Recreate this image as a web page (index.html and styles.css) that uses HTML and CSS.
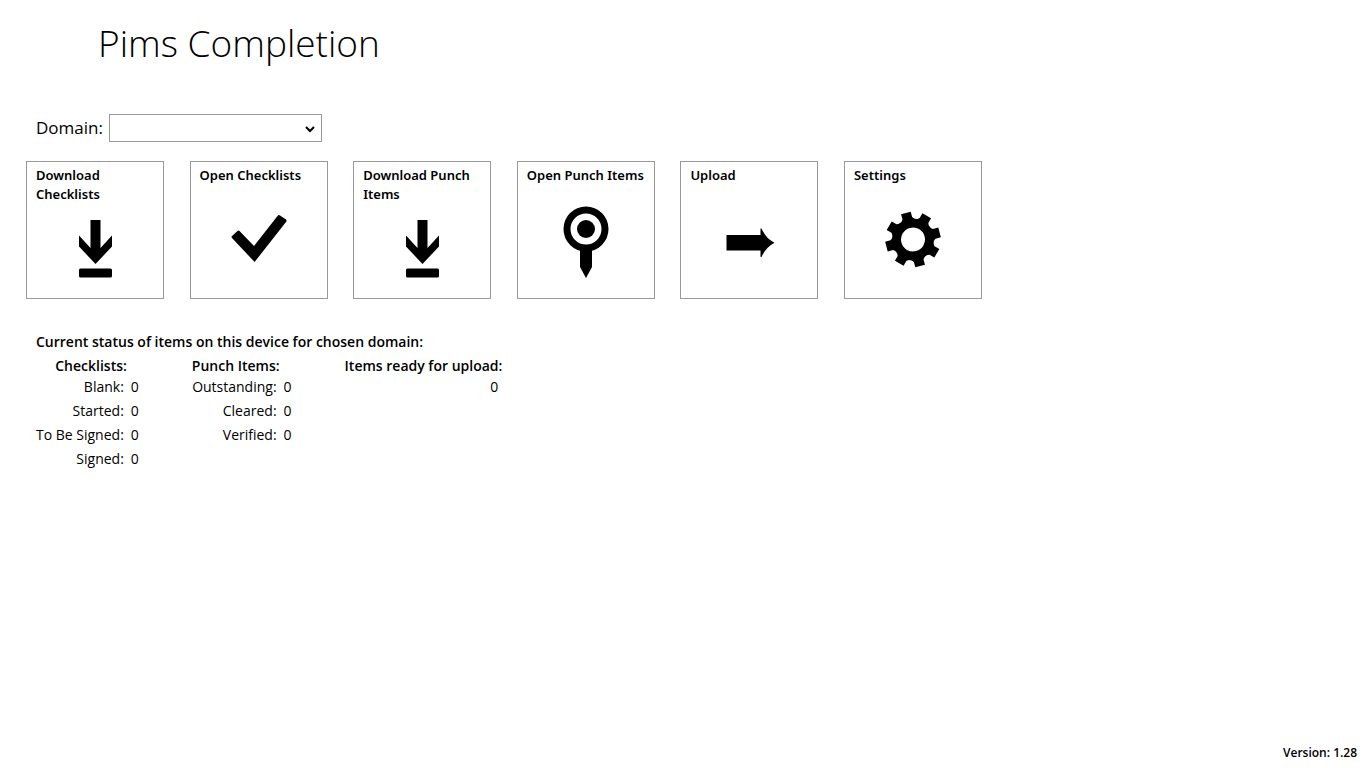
FILE: index.html
```html
<!DOCTYPE html>
<html lang="en">

<head>
    <meta charset="UTF-8">
    <meta name="viewport" content="width=device-width, initial-scale=1.0">
    <title>Pims Completion</title>
    <link rel="stylesheet" href="styles.css">
</head>

<body>

    <header>
        <h1>Pims Completion</h1>
    </header>

    <main>
        <div class="domain">
            <label for="domain">Domain:</label>
            <div class="select-box">
                <select id="domain">
                    <option value=""></option>
                </select>
                <svg class="chevron" viewBox="0 0 10 8" aria-hidden="true">
                    <path d="M1 2 L5 6 L9 2" fill="none" stroke="#000" stroke-width="2"/>
                </svg>
            </div>
        </div>

        <div class="tiles">
            <button class="tile" type="button">
                <span class="tile-label">Download Checklists</span>
                <svg class="tile-icon" viewBox="0 0 64 80" aria-hidden="true">
                    <path d="M27.500 16H37.500V44L49 31.500V42.500L32.500 60L16 42.500V31.500L27.500 44Z"/>
                    <rect x="16" y="64.500" width="33" height="9" rx="1.500"/>
                </svg>
            </button>
            <button class="tile" type="button">
                <span class="tile-label">Open Checklists</span>
                <svg class="tile-icon" viewBox="0 0 64 80" aria-hidden="true">
                    <path d="M5 34Q4 33 5 32L10.500 27Q11.500 26 12.500 27L27 42L50.500 12Q51.500 10.500 53 11.500L59 15.500Q60 16.500 59 18L27.600 58Z"/>
                </svg>
            </button>
            <button class="tile" type="button">
                <span class="tile-label">Download Punch Items</span>
                <svg class="tile-icon" viewBox="0 0 64 80" aria-hidden="true">
                    <path d="M27.500 16H37.500V44L49 31.500V42.500L32.500 60L16 42.500V31.500L27.500 44Z"/>
                    <rect x="16" y="64.500" width="33" height="9" rx="1.500"/>
                </svg>
            </button>
            <button class="tile" type="button">
                <span class="tile-label">Open Punch Items</span>
                <svg class="tile-icon" viewBox="0 0 64 80" aria-hidden="true">
                    <circle cx="32" cy="25" r="19" fill="none" stroke="#000" stroke-width="7"/>
                    <circle cx="32" cy="25" r="9"/>
                    <path d="M26 45H38V63L32 74L26 63Z"/>
                </svg>
            </button>
            <button class="tile" type="button">
                <span class="tile-label">Upload</span>
                <svg class="tile-icon" viewBox="0 0 64 80" aria-hidden="true">
                    <path d="M9.500 31H43.500V24.500H44.500Q49 35 57.500 38.700Q49 43 44.500 53H43.500V46.500H9.500Z"/>
                </svg>
            </button>
            <button class="tile" type="button">
                <span class="tile-label">Settings</span>
                <svg class="tile-icon" viewBox="0 0 64 80" aria-hidden="true">
                    <g transform="translate(32 35.500) rotate(-15)">
                        <circle r="16.500" fill="none" stroke="#000" stroke-width="9"/>
                        <path id="tooth" d="M-8 -18L-5 -22V-27.500H5V-22L8 -18Z"/>
                        <use href="#tooth" transform="rotate(45)"/>
                        <use href="#tooth" transform="rotate(90)"/>
                        <use href="#tooth" transform="rotate(135)"/>
                        <use href="#tooth" transform="rotate(180)"/>
                        <use href="#tooth" transform="rotate(225)"/>
                        <use href="#tooth" transform="rotate(270)"/>
                        <use href="#tooth" transform="rotate(315)"/>
                    </g>
                </svg>
            </button>
        </div>

        <section class="status">
            <h2>Current status of items on this device for chosen domain:</h2>
            <div class="status-tables">
                <table class="counts">
                    <thead>
                        <tr><th colspan="2">Checklists:</th></tr>
                    </thead>
                    <tbody>
                        <tr><td>Blank:</td><td>0</td></tr>
                        <tr><td>Started:</td><td>0</td></tr>
                        <tr><td>To Be Signed:</td><td>0</td></tr>
                        <tr><td>Signed:</td><td>0</td></tr>
                    </tbody>
                </table>
                <table class="counts">
                    <thead>
                        <tr><th colspan="2">Punch Items:</th></tr>
                    </thead>
                    <tbody>
                        <tr><td>Outstanding:</td><td>0</td></tr>
                        <tr><td>Cleared:</td><td>0</td></tr>
                        <tr><td>Verified:</td><td>0</td></tr>
                    </tbody>
                </table>
                <table class="upload-count">
                    <thead>
                        <tr><th>Items ready for upload:</th></tr>
                    </thead>
                    <tbody>
                        <tr><td>0</td></tr>
                    </tbody>
                </table>
            </div>
        </section>
    </main>

    <footer>Version: 1.28</footer>

</body>

</html>
```

FILE: styles.css
```css
* {
    box-sizing: border-box;
}

body {
    font-family: 'Open Sans', 'Noto Sans', sans-serif;
    font-size: 14px;
    color: #000;
    background-color: #fff;
    margin: 0;
    min-height: 100vh;
    display: flex;
    flex-direction: column;
}

header {
    padding: 15px 98px 0;
}

h1 {
    margin: 0;
    font-size: 37px;
    font-weight: 300;
    line-height: 56px;
}

main {
    padding: 43px 26px 0;
}

.domain {
    display: flex;
    align-items: center;
    gap: 6px;
    padding-left: 10px;
    font-size: 17px;
    line-height: 26px;
}

.domain label {
    padding-bottom: 1px;
}

.select-box {
    position: relative;
    width: 213px;
    height: 28px;
}

select {
    appearance: none;
    width: 100%;
    height: 100%;
    padding: 0 24px 0 8px;
    border: 1px solid #999;
    border-radius: 0;
    background-color: #fff;
    font: inherit;
}

.chevron {
    position: absolute;
    right: 7px;
    top: 11px;
    width: 10px;
    height: 8px;
    pointer-events: none;
}

.tiles {
    display: flex;
    flex-wrap: wrap;
    justify-content: space-between;
    max-width: 956px;
    margin-top: 19px;
}

.tile {
    display: flex;
    flex-direction: column;
    align-items: center;
    width: 138px;
    height: 138px;
    padding: 4px 0;
    border: 1px solid #999;
    background-color: #fff;
    color: #000;
    font-family: 'Noto Sans', 'Open Sans', sans-serif;
    font-size: 13px;
    font-weight: 600;
    line-height: 19px;
    text-align: left;
    cursor: pointer;
}

.tile-label {
    width: 100%;
    height: 38px;
    padding: 0 8px 0 9px;
}

.tile-icon {
    width: 64px;
    height: 80px;
}

.status {
    padding: 33px 10px 0;
}

h2 {
    margin: 0;
    font-size: 14px;
    font-weight: 600;
    line-height: 20px;
}

.status-tables {
    display: flex;
    align-items: flex-start;
    gap: 53px;
    margin-top: 5px;
}

table {
    border-collapse: collapse;
    text-align: right;
}

th,
td {
    padding: 0;
    white-space: nowrap;
}

th {
    font-weight: 600;
    line-height: 18px;
    text-align: right;
}

td {
    line-height: 24px;
}

.counts th {
    padding-right: 12px;
}

.counts td + td {
    width: 15px;
}

.upload-count td {
    padding-right: 4px;
}

footer {
    margin-top: auto;
    padding: 0 8px 7px;
    font-size: 12px;
    font-weight: 600;
    line-height: 16px;
    text-align: right;
}
```
